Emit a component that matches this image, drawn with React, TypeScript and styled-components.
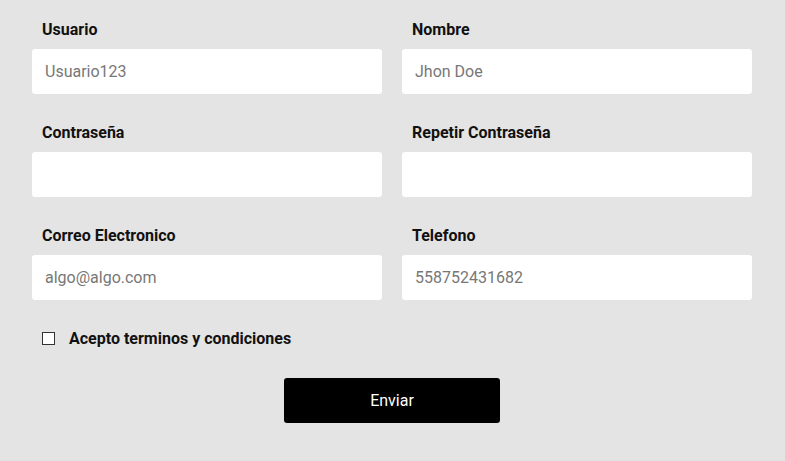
import styled, { createGlobalStyle } from "styled-components";

const fields = [
  { label: "Usuario", placeholder: "Usuario123", type: "text" },
  { label: "Nombre", placeholder: "Jhon Doe", type: "text" },
  { label: "Contraseña", placeholder: "", type: "password" },
  { label: "Repetir Contraseña", placeholder: "", type: "password" },
  { label: "Correo Electronico", placeholder: "algo@algo.com", type: "email" },
  { label: "Telefono", placeholder: "558752431682", type: "tel" },
];

export default function App() {
  return (
    <>
      <GlobalStyle />
      <StPage>
        <StForm onSubmit={(e) => e.preventDefault()}>
          <StGrid>
            {fields.map((f) => (
              <StField key={f.label}>
                <StLabel>{f.label}</StLabel>
                <StInput type={f.type} placeholder={f.placeholder} />
              </StField>
            ))}
          </StGrid>
          <StCheckRow>
            <StCheckbox type="checkbox" />
            <span>Acepto terminos y condiciones</span>
          </StCheckRow>
          <StButton type="submit">Enviar</StButton>
        </StForm>
      </StPage>
    </>
  );
}

const GlobalStyle = createGlobalStyle`
  body {
    margin: 0;
    background-color: #e4e4e4;
    font-family: Roboto, "Liberation Sans", sans-serif;
  }
`;

const StPage = styled.main`
  min-height: 100vh;
  background-color: #e4e4e4;
  padding-left: 32px;
  display: flex;
`;

const StForm = styled.form`
  width: 720px;
  padding-top: 20px;
  display: flex;
  flex-direction: column;
`;

const StGrid = styled.div`
  display: grid;
  grid-template-columns: 350px 350px;
  column-gap: 20px;
  row-gap: 29px;
`;

const StField = styled.div`
  display: flex;
  flex-direction: column;
`;

const StLabel = styled.label`
  margin: 1px 0 10px 10px;
  height: 18px;
  line-height: 18px;
  font-size: 16px;
  font-weight: 700;
  color: #111;
`;

const StInput = styled.input`
  box-sizing: border-box;
  height: 45px;
  padding: 0 13px;
  border: none;
  border-radius: 3px;
  background: #fff;
  font-family: Roboto, "Liberation Sans", sans-serif;
  font-size: 16px;
  color: #222;
  outline: none;

  &::placeholder {
    color: #777;
  }
`;

const StCheckRow = styled.label`
  margin: 30px 0 0 10px;
  height: 16px;
  display: flex;
  align-items: center;
  gap: 14px;
  font-size: 16px;
  font-weight: 700;
  color: #111;
`;

const StCheckbox = styled.input`
  appearance: none;
  box-sizing: border-box;
  width: 13px;
  height: 13px;
  margin: 0;
  border: 1px solid #333;
  background: #fff;

  &:checked {
    background: #333;
  }
`;

const StButton = styled.button`
  align-self: center;
  margin-top: 32px;
  width: 216px;
  height: 45px;
  border: none;
  border-radius: 3px;
  background: #000;
  color: #fff;
  font-family: Roboto, "Liberation Sans", sans-serif;
  font-size: 16px;
  font-weight: 400;
  cursor: pointer;
`;
